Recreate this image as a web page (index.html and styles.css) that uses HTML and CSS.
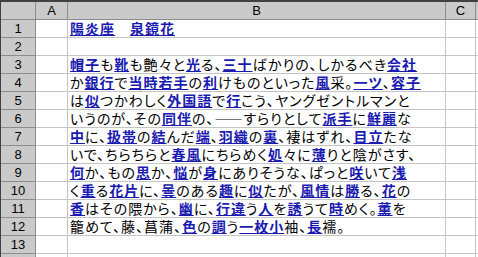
FILE: index.html
```html
<!DOCTYPE html>
<html lang="ja">
<head>
<meta charset="utf-8">
<title>陽炎座 - Sheet1</title>
<link rel="stylesheet" href="styles.css">
</head>
<body>
<div class="sheet">
  <div class="corner"></div><div class="colhead">A</div><div class="colhead">B</div><div class="colhead">C</div><div class="colhead last"></div>

  <div class="rowhead">1</div><div class="cell"></div><div class="cell text"><a href="#">陽炎座</a>　<a href="#">泉鏡花</a></div><div class="cell"></div><div class="cell last"></div>
  <div class="rowhead">2</div><div class="cell"></div><div class="cell text"></div><div class="cell"></div><div class="cell last"></div>
  <div class="rowhead">3</div><div class="cell"></div><div class="cell text"><a href="#">帽子</a>も<a href="#">靴</a>も艶々と<a href="#">光</a>る、<a href="#">三十</a>ばかりの、しかるべき<a href="#">会社</a></div><div class="cell"></div><div class="cell last"></div>
  <div class="rowhead">4</div><div class="cell"></div><div class="cell text">か<a href="#">銀行</a>で<a href="#">当時若手</a>の<a href="#">利</a>けものといった<a href="#">風</a>采。<a href="#">一ツ</a>、<a href="#">容子</a></div><div class="cell"></div><div class="cell last"></div>
  <div class="rowhead">5</div><div class="cell"></div><div class="cell text">は<a href="#">似</a>つかわしく<a href="#">外国語</a>で<a href="#">行</a>こう、ヤングゼントルマンと</div><div class="cell"></div><div class="cell last"></div>
  <div class="rowhead">6</div><div class="cell"></div><div class="cell text">いうのが、その<a href="#">同伴</a>の、――すらりとして<a href="#">派手</a>に<a href="#">鮮麗</a>な</div><div class="cell"></div><div class="cell last"></div>
  <div class="rowhead">7</div><div class="cell"></div><div class="cell text"><a href="#">中</a>に、<a href="#">扱帯</a>の<a href="#">結</a>んだ<a href="#">端</a>、<a href="#">羽織</a>の<a href="#">裏</a>、褄はずれ、<a href="#">目立</a>たな</div><div class="cell"></div><div class="cell last"></div>
  <div class="rowhead">8</div><div class="cell"></div><div class="cell text">いで、ちらちらと<a href="#">春風</a>にちらめく<a href="#">処</a>々に<a href="#">薄</a>りと陰がさす、</div><div class="cell"></div><div class="cell last"></div>
  <div class="rowhead">9</div><div class="cell"></div><div class="cell text"><a href="#">何</a>か、もの<a href="#">思</a>か、<a href="#">悩</a>が<a href="#">身</a>にありそうな、ぱっと<a href="#">咲</a>いて<a href="#">浅</a></div><div class="cell"></div><div class="cell last"></div>
  <div class="rowhead">10</div><div class="cell"></div><div class="cell text">く<a href="#">重</a>る<a href="#">花片</a>に、<a href="#">曇</a>のある<a href="#">趣</a>に<a href="#">似</a>たが、<a href="#">風情</a>は<a href="#">勝</a>る、<a href="#">花</a>の</div><div class="cell"></div><div class="cell last"></div>
  <div class="rowhead">11</div><div class="cell"></div><div class="cell text"><a href="#">香</a>はその隈から、<a href="#">幽</a>に、<a href="#">行違</a>う<a href="#">人</a>を<a href="#">誘</a>うて<a href="#">時</a>めく。<a href="#">薫</a>を</div><div class="cell"></div><div class="cell last"></div>
  <div class="rowhead">12</div><div class="cell"></div><div class="cell text">籠めて、藤、菖蒲、<a href="#">色</a>の<a href="#">調</a>う<a href="#">一枚小</a>袖、<a href="#">長</a>襦。</div><div class="cell"></div><div class="cell last"></div>
  <div class="rowhead">13</div><div class="cell"></div><div class="cell text"></div><div class="cell"></div><div class="cell last"></div>
  <div class="rowhead"></div><div class="cell"></div><div class="cell text"></div><div class="cell"></div><div class="cell last"></div>
</div>
</body>
</html>
```

FILE: styles.css
```css
html, body { margin: 0; padding: 0; background: #fff; }

body {
	font-family: "Noto Sans CJK JP", "Liberation Sans", sans-serif;
	color: #000;
	overflow: hidden;
}

/* the worksheet grid: row header, A, B, C and a sliver of D */
.sheet {
	display: grid;
	grid-template-columns: 35px 32px 378px 30px 1fr;
	grid-template-rows: 18px repeat(14, 18px);
	border-top: 2px solid #404040;
	border-left: 1px solid #404040;
}

.sheet > div { box-sizing: border-box; }

.corner, .colhead, .rowhead {
	background: #cacaca;
	border-right: 1px solid #8c8c8c;
	border-bottom: 1px solid #8c8c8c;
	font-family: "Liberation Sans", Arial, sans-serif;
	font-size: 13px;
	color: #000;
	display: flex;
	align-items: center;
	justify-content: center;
}

.colhead.last { border-right: none; }

.cell {
	border-right: 1px solid #c4c4c4;
	border-bottom: 1px solid #c4c4c4;
}

.cell.last { border-right: none; }

.text {
	padding-left: 2px;
	font-size: 14px;
	line-height: 17px;
	letter-spacing: 1px;
	white-space: nowrap;
	font-feature-settings: "palt";
	overflow: visible;
}

.text a {
	color: #1a1ab0;
	font-weight: bold;
	text-decoration: underline;
	text-decoration-thickness: 1px;
	text-underline-offset: 1px;
}
```
